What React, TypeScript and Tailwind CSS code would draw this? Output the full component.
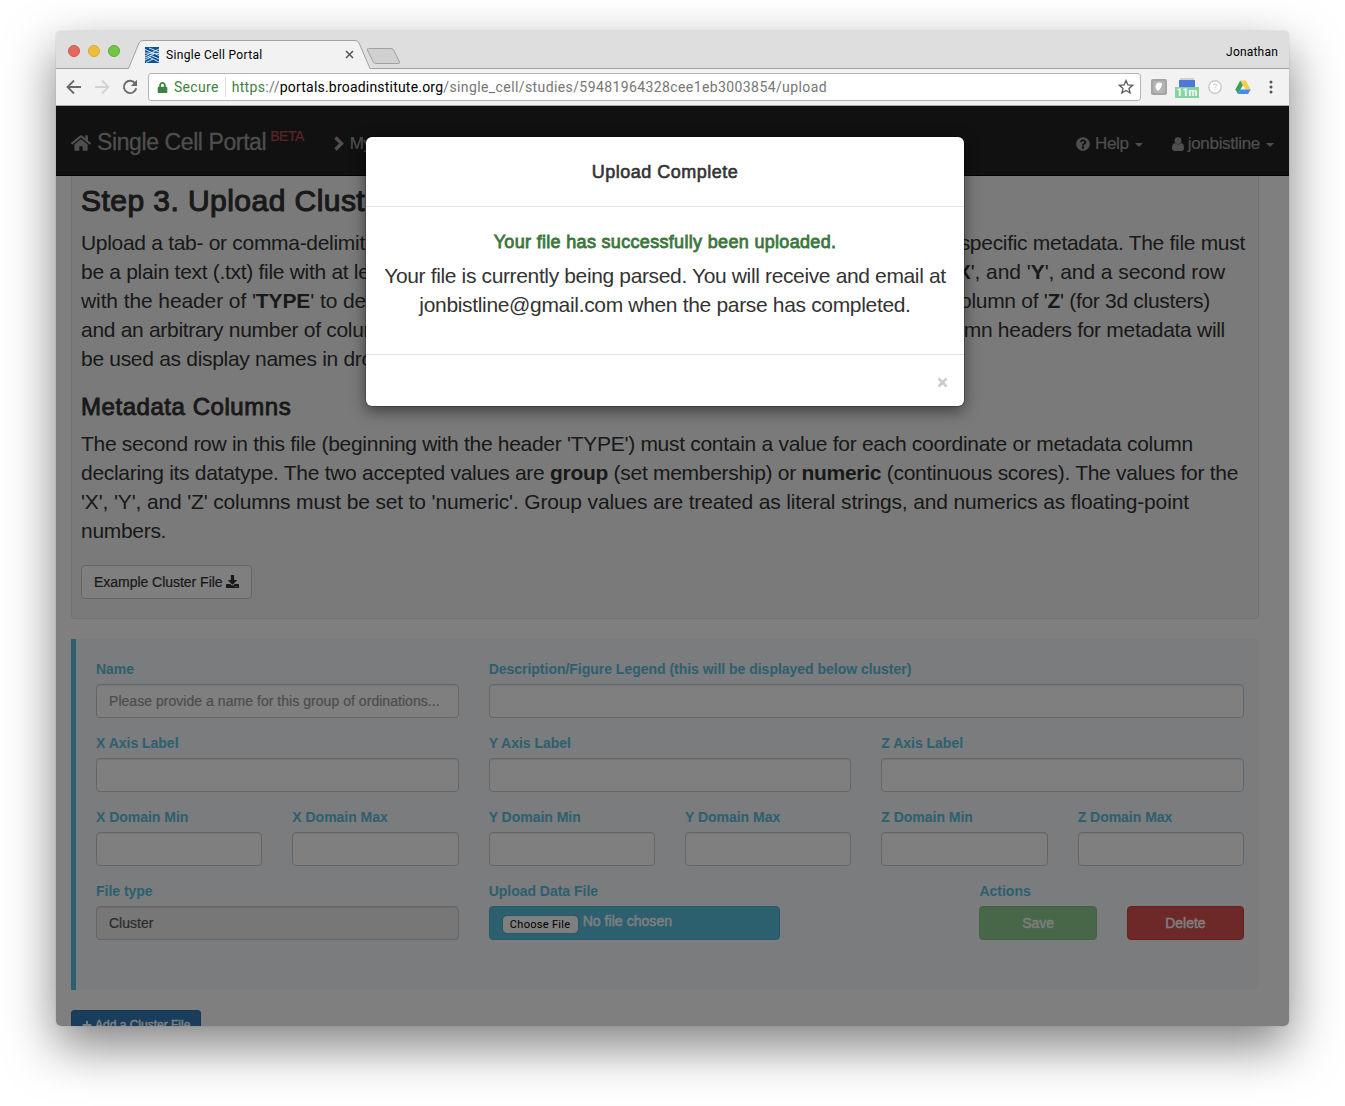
import type { ReactNode } from 'react';
import { FaHome, FaQuestionCircle, FaDownload, FaPlus, FaLock } from 'react-icons/fa';

const helv = "font-['Liberation_Sans',Arial,sans-serif]";
const chromeFont = 'font-[Roboto,sans-serif]';

function TabStrip() {
  return (
    <div className={`relative flex h-[38px] shrink-0 items-stretch border-b border-[#a2a2a2] bg-[#dedede] ${chromeFont}`}>
      <div className="ml-3 flex items-center gap-2 pt-[2px]">
        <span className="size-3 rounded-full border border-[#d0574b] bg-[#e26b5d]" />
        <span className="size-3 rounded-full border border-[#d9a832] bg-[#efbf3b]" />
        <span className="size-3 rounded-full border border-[#5cab34] bg-[#73c544]" />
      </div>
      <svg className="absolute left-[71px] top-[8px]" width="276" height="31" viewBox="0 0 276 31" fill="none">
        <path d="M0 29.5 H1.5 L12 4 Q13.5 1.5 16 1.5 H228 Q231 1.5 232 4 L243 29.5 H276 V31 H0 Z" fill="#f2f2f2" />
        <path d="M0 29.5 H1.500 L12 4 Q13.500 1.500 16 1.500 H228 Q231 1.500 232 4 L243 29.500 H276" stroke="#a2a2a2" />
        <path d="M241.500 9.500 H264 Q266 9.500 267 11.500 L272.500 23 Q273 24.500 271 24.500 H249 Q247 24.500 246 22.500 L240.500 11 Q240 9.500 241.500 9.500 Z" fill="#d0d0d0" stroke="#a2a2a2" />
      </svg>
      <div className="relative ml-[25px] flex w-[211px] items-center pt-[10px]">
        <svg width="14" height="16" viewBox="0 0 14 16" className="shrink-0">
          <rect width="14" height="16" fill="#0b5394" />
          <path d="M0 2.500 L14 8.500 M4 1 L14 5 M0 6 L14 6.500 M0 9 L14 2 M0 11 L9 7 M5 8 L14 12 M3 9.500 L14 15 M0 13 L6 10 M1 15.500 L8 12" stroke="#e4f0fa" strokeWidth=".9" />
        </svg>
        <span className="ml-[7px] text-[12px] tracking-[0.32px] text-black">Single Cell Portal</span>
        <svg className="ml-auto mr-[2px]" width="9" height="9" viewBox="0 0 9 9"><path d="M1 1 L8 8 M8 1 L1 8" stroke="#555" strokeWidth="1.500" /></svg>
      </div>
      <span className="ml-auto mr-[11px] pt-[12px] text-[12px] tracking-[0.2px] text-black">Jonathan</span>
    </div>
  );
}

function Toolbar() {
  return (
    <div className={`flex h-[37px] shrink-0 items-center border-b border-[#a8a8a8] bg-[#f2f2f2] ${chromeFont}`}>
      <svg className="ml-[10px]" width="16" height="16" viewBox="0 0 16 16" fill="none" stroke="#6a6a6a" strokeWidth="1.800"><path d="M15 8 H2 M8 1.500 L1.500 8 L8 14.500" /></svg>
      <svg className="ml-[12px]" width="16" height="16" viewBox="0 0 16 16" fill="none" stroke="#d2d2d2" strokeWidth="1.800"><path d="M1 8 H14 M8 1.500 L14.500 8 L8 14.500" /></svg>
      <svg className="ml-[12px]" width="16" height="16" viewBox="0 0 16 16" fill="none"><path d="M13.300 4.500 A6.200 6.200 0 1 0 14.200 9.200" stroke="#6a6a6a" strokeWidth="1.900" /><path d="M15 0.800 V7 H8.800 Z" fill="#6a6a6a" /></svg>
      <div className="ml-[10px] flex h-[28px] w-[993px] items-center rounded-[3px] border border-[#b4b4b4] bg-white text-[14px]">
        <FaLock className="ml-[8px] text-[#3f8243]" size={11} />
        <span className="ml-[6px] tracking-[0.3px] text-[#3f8243]">Secure</span>
        <span className="ml-[6px] h-5 w-px bg-[#dcdcdc]" />
        <span className="ml-[6px] whitespace-nowrap tracking-[0.35px] text-[#767676]"><span className="text-[#3f8243]">https</span>://<span className="tracking-[0.2px] text-black">portals.broadinstitute.org</span><span className="tracking-[0.4px]">/single_cell/studies/59481964328cee1eb3003854/upload</span></span>
        <svg className="ml-auto mr-[6px]" width="16" height="16" viewBox="0 0 16 16" fill="none" stroke="#5a5a5a" strokeWidth="1.300"><path d="M8 1.500 L9.900 5.900 L14.600 6.300 L11 9.400 L12.100 14 L8 11.500 L3.900 14 L5 9.400 L1.400 6.300 L6.100 5.900 Z" /></svg>
      </div>
      <svg className="ml-[10px]" width="16" height="16" viewBox="0 0 16 16"><rect width="16" height="16" rx="2" fill="#a4a4a4" /><rect x="2" y="2" width="12" height="12" rx="2" fill="#b4b4b4" /><path d="M5.500 4.500 Q8.500 2.500 11 4.500 Q10.500 9.500 7 12 Q3 9 5.500 4.500Z" fill="#fff" /></svg>
      <div className="ml-2 mt-[2px] flex h-5 w-6 flex-col items-center">
        <span className="h-[2px] w-[14px] bg-[#cfcfcf]" />
        <span className="h-[7px] w-4 shrink-0 bg-[#5078d8]" />
        <span className="flex h-[11px] w-6 items-center justify-center bg-[#86d3a1] text-[10px] font-bold leading-[11px] tracking-[0.3px] text-white">11m</span>
      </div>
      <svg className="ml-[9px]" width="14" height="14" viewBox="0 0 14 14"><circle cx="7" cy="7" r="6.200" fill="#fff" stroke="#c9c9c9" strokeWidth="1.400" /><path d="M5.300 5.600 Q5.400 4 7 4 Q8.700 4 8.700 5.400 Q8.700 6.300 7.600 6.800 Q7 7.100 7 8 M7 9 V10" fill="none" stroke="#c4c4c4" /></svg>
      <svg className="ml-[13px]" width="16" height="15" viewBox="0 0 16 15"><path d="M5.300 0.500 L8 5 L3 14 L0.300 9.600Z" fill="#35a35b" /><path d="M5.300 0.500 H10.700 L15.800 9.600 H10.600Z" fill="#f4cf48" /><path d="M5.500 9.600 H15.800 L13 14 H3Z" fill="#4d86ec" /></svg>
      <svg className="ml-[18px]" width="4" height="14" viewBox="0 0 4 14" fill="#555"><circle cx="2" cy="2" r="1.500" /><circle cx="2" cy="7" r="1.500" /><circle cx="2" cy="12" r="1.500" /></svg>
    </div>
  );
}

function Caret() {
  return <svg className="ml-[6px] mt-[3px]" width="8" height="4" viewBox="0 0 8 4"><path d="M0 0 H8 L4 4 Z" fill="currentColor" /></svg>;
}

function Navbar() {
  return (
    <nav className="flex h-[70px] shrink-0 items-center whitespace-nowrap border-b border-[#080808] bg-[#222] pl-[15px] pt-[4px] text-[#9d9d9d]">
      <FaHome size={20} />
      <span className="ml-[6px] pb-px text-[23px] tracking-[-0.4px] [-webkit-text-stroke:0.3px]">Single Cell Portal</span>
      <span className="ml-[4px] pb-[12px] text-[14px] tracking-[-0.5px] text-[#b94a48] [-webkit-text-stroke:0.2px]">BETA</span>
      <svg className="ml-[29px] mt-[2px]" width="12" height="15" viewBox="0 0 12 15"><path d="M2.500 1.500 L8.500 7.500 L2.500 13.500" fill="none" stroke="currentColor" strokeWidth="3.400" /></svg>
      <span className="ml-[5px] mt-[2px] text-[17px] tracking-[-0.4px] [-webkit-text-stroke:0.2px]">My Studies</span>
      <div className="ml-auto mr-[15px] mt-[2px] flex items-center text-[17px] tracking-[-0.3px] [-webkit-text-stroke:0.2px]">
        <FaQuestionCircle size={14} /><span className="ml-[5px]">Help</span><Caret />
        <svg className="ml-[29px]" width="12" height="14" viewBox="0 0 12 14" fill="currentColor"><circle cx="6" cy="3.600" r="3.400" /><path d="M3 6 Q6 8.800 9 6 Q12 6.500 12 11 Q12 14 9.500 14 H2.500 Q0 14 0 11 Q0 6.500 3 6Z" /></svg>
        <span className="ml-[4px]">jonbistline</span><Caret />
      </div>
    </nav>
  );
}

function Instructions() {
  return (
    <section className="h-[443px] shrink-0 whitespace-nowrap rounded-b-[4px] border border-t-0 border-[#e3e3e3] bg-[#f5f5f5] px-[9px] pt-[8px] text-[#333]">
      <h2 className="text-[30px] leading-[33px] tracking-[0.45px] [-webkit-text-stroke:1.1px]">Step 3. Upload Cluster File</h2>
      <div className="mt-[11px] text-[21px] leading-[29px] tracking-[-0.3px]">
        <p className="flex justify-between pr-[4px]"><span>Upload a tab- or comma-delimited</span><span>specific metadata. The file must</span></p>
        <p className="flex justify-between pr-[24px]"><span>be a plain text (.txt) file with at least</span><span className="tracking-[-0.06px]">'<b>X</b>', and '<b>Y</b>', and a second row</span></p>
        <p className="flex justify-between pr-[39px]"><span className="tracking-[-0.1px]">with the header of '<b>TYPE</b>' to denote</span><span>column of '<b>Z</b>' (for 3d clusters)</span></p>
        <p className="flex justify-between pr-[24px]"><span>and an arbitrary number of columns</span><span>column headers for metadata will</span></p>
        <p>be used as display names in dropdown</p>
      </div>
      <h3 className="mt-[21px] text-[24px] leading-[26px] tracking-[0.55px] [-webkit-text-stroke:0.9px]">Metadata Columns</h3>
      <div className="mt-[9px] text-[21px] leading-[29px]">
        <p className="tracking-[-0.29px]">The second row in this file (beginning with the header 'TYPE') must contain a value for each coordinate or metadata column</p>
        <p className="tracking-[-0.29px]">declaring its datatype. The two accepted values are <b>group</b> (set membership) or <b>numeric</b> (continuous scores). The values for the</p>
        <p className="tracking-[-0.15px]">'X', 'Y', and 'Z' columns must be set to 'numeric'. Group values are treated as literal strings, and numerics as floating-point</p>
        <p className="tracking-[-0.3px]">numbers.</p>
      </div>
      <button className="mt-[20px] flex h-[34px] w-[171px] items-center rounded-[4px] border border-[#ccc] bg-white pl-[12px] text-[14px] tracking-[-0.03px] text-[#333] [-webkit-text-stroke:0.2px]">
        Example Cluster File<FaDownload className="mb-px ml-[3px]" size={13} />
      </button>
    </section>
  );
}

function Field({ label, span, children }: { label: string; span: string; children?: ReactNode }) {
  return (
    <div className={`${span} h-[74px] min-w-0`}>
      <label className="mb-[5px] block whitespace-nowrap text-[14px] font-bold leading-5 tracking-[-0.02px] text-[#5bc0de]">{label}</label>
      {children ?? <input className="block h-[34px] w-full rounded-[4px] border border-[#ccc] bg-white shadow-[inset_0_1px_1px_rgba(0,0,0,0.075)]" />}
    </div>
  );
}

function ClusterForm() {
  return (
    <form className="mt-5 grid h-[351px] shrink-0 grid-cols-12 content-start gap-x-[30px] border-l-[5px] border-[#5bc0de] bg-[#f4f8fa] pb-5 pl-5 pr-[15px] pt-5">
      <Field label="Name" span="col-span-4">
        <input placeholder="Please provide a name for this group of ordinations..." className="block h-[34px] w-full rounded-[4px] border border-[#ccc] bg-white px-3 text-[14px] tracking-[0.04px] shadow-[inset_0_1px_1px_rgba(0,0,0,0.075)] [-webkit-text-stroke:0.2px] placeholder:text-[#999]" />
      </Field>
      <Field label="Description/Figure Legend (this will be displayed below cluster)" span="col-span-8" />
      <Field label="X Axis Label" span="col-span-4" />
      <Field label="Y Axis Label" span="col-span-4" />
      <Field label="Z Axis Label" span="col-span-4" />
      <Field label="X Domain Min" span="col-span-2" />
      <Field label="X Domain Max" span="col-span-2" />
      <Field label="Y Domain Min" span="col-span-2" />
      <Field label="Y Domain Max" span="col-span-2" />
      <Field label="Z Domain Min" span="col-span-2" />
      <Field label="Z Domain Max" span="col-span-2" />
      <Field label="File type" span="col-span-4">
        <div className="flex h-[34px] items-center rounded-[4px] border border-[#ccc] bg-[#eee] px-3 text-[14px] text-[#555] shadow-[inset_0_1px_1px_rgba(0,0,0,0.075)] [-webkit-text-stroke:0.2px]">Cluster</div>
      </Field>
      <Field label="Upload Data File" span="col-span-5">
        <div className="flex h-[34px] w-[291px] rounded-[4px] border border-[#46b8da] bg-[#5bc0de] pl-[13px] text-[14px] text-white">
          <span className={`mt-[9px] flex h-[17px] w-[75px] items-center justify-center rounded-[4px] bg-white pt-px text-[11px] tracking-[0.3px] text-black shadow-[0_0_1px_#333] ${chromeFont}`}>Choose File</span>
          <span className="ml-[5px] mt-[4px] leading-5 tracking-[0.05px] [-webkit-text-stroke:0.4px]">No file chosen</span>
        </div>
      </Field>
      <Field label="Actions" span="col-span-3">
        <div className="grid grid-cols-2 gap-[30px] text-[14px] text-white [-webkit-text-stroke:0.4px]">
          <button className="h-[34px] rounded-[4px] border border-[#4cae4c] bg-[#5cb85c] opacity-65">Save</button>
          <button className="h-[34px] rounded-[4px] border border-[#d43f3a] bg-[#d9534f]">Delete</button>
        </div>
      </Field>
    </form>
  );
}

function UploadDialog() {
  return (
    <div role="dialog" className="absolute left-[310px] top-[31px] flex h-[269px] w-[598px] flex-col whitespace-nowrap rounded-[6px] bg-white text-center text-[#333] shadow-[0_5px_15px_rgba(0,0,0,0.5),0_0_0_1px_rgba(0,0,0,0.2)]">
      <header className="h-[70px] border-b border-[#e5e5e5] pt-[25px] text-[18px] leading-5 tracking-[0.5px] [-webkit-text-stroke:0.6px]">Upload Complete</header>
      <div className="h-[147px] pt-[25px]">
        <p className="text-[18px] leading-5 tracking-[0.32px] text-[#3c763d] [-webkit-text-stroke:0.8px]">Your file has successfully been uploaded.</p>
        <p className="mt-[9px] text-[21px] leading-[29px] tracking-[-0.36px]">Your file is currently being parsed. You will receive and email at<br /><span className="tracking-[-0.33px]">jonbistline@gmail.com when the parse has completed.</span></p>
      </div>
      <footer className="flex grow justify-end border-t border-[#e5e5e5] pr-[16px] pt-[22px]">
        <svg width="11" height="11" viewBox="0 0 11 11"><path d="M1.500 1.500 L9.500 9.500 M9.500 1.500 L1.500 9.500" stroke="#ccc" strokeWidth="2.600" /></svg>
      </footer>
    </div>
  );
}

export default function App() {
  return (
    <div className={`h-[1106px] w-[1345px] overflow-hidden bg-white pl-[56px] pt-[31px] ${helv}`}>
      <div className="flex h-[995px] w-[1233px] flex-col rounded-[5px] shadow-[0_20px_50px_rgba(0,0,0,0.5),0_0_1px_rgba(0,0,0,0.4)]">
        <div className="flex h-full flex-col overflow-hidden rounded-[5px]">
          <TabStrip />
          <Toolbar />
          <div className="relative h-[920px] overflow-hidden bg-white">
            <Navbar />
            <main className="flex flex-col pl-[15px] pr-[30px]">
              <Instructions />
              <ClusterForm />
              <button className="mt-5 flex h-[30px] w-[130px] shrink-0 items-center whitespace-nowrap rounded-[3px] border border-[#2e6da4] bg-[#337ab7] pl-[10px] text-[12px] text-white [-webkit-text-stroke:0.4px]">
                <FaPlus size={10} className="mr-[3px]" />Add a Cluster File
              </button>
            </main>
            <div className="absolute inset-0 bg-black/50" />
            <UploadDialog />
          </div>
        </div>
      </div>
    </div>
  );
}
